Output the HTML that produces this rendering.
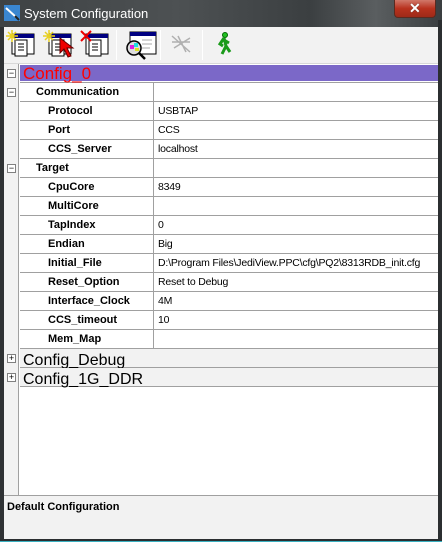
<!DOCTYPE html>
<html><head><meta charset="utf-8"><style>
*{margin:0;padding:0;box-sizing:border-box}
body{width:442px;height:542px;position:relative;overflow:hidden;background:#2f3234;font-family:"Liberation Sans",Tahoma,sans-serif}
.title{position:absolute;left:0;top:0;width:442px;height:27px;background:linear-gradient(90deg,#3e4244 0%,#4d5153 40%,#3b3f41 70%,#5a5e60 85%,#3a3e40 100%)}
.title .t{position:absolute;left:24px;top:6px;color:#fff;font-size:13px}
.close{position:absolute;left:394px;top:0;width:42px;height:18px;border:1px solid #5a2a20;border-top:none;border-radius:0 0 4px 4px;background:linear-gradient(#d0786a,#b8321e 50%,#9e2a18)}
.close span{position:absolute;left:14px;top:0px;color:#fff;font-weight:bold;font-size:14px;text-shadow:0 0 1px #333}
.client{position:absolute;left:4px;top:27px;width:434px;height:512px;background:#fff;overflow:hidden}
.tb{position:absolute;left:0;top:0;width:434px;height:37px;background:#f2f2f2;border-bottom:1px solid #d8d8d8}
.sep{position:absolute;top:3px;width:1px;height:30px;background:#a0a0a0;border-right:1px solid #fff}
.gut{position:absolute;left:0;top:37px;width:15px;height:431px;background:#f2f2f2;border-right:1px solid #a0a0a0}
.row{position:absolute;left:16px;width:418px;height:19px;border-bottom:1px solid #a0a0a0;font-size:11px}
.row .k{position:absolute;top:3px;font-weight:bold}
.row .v{position:absolute;left:133px;top:0;height:18px;border-left:1px solid #a0a0a0;padding:3px 0 0 4px;width:285px;white-space:nowrap;overflow:hidden;font-size:10.5px;letter-spacing:-0.2px}
.box{position:absolute;left:3px;width:9px;height:9px;border:1px solid #808080;background:#fff;font-size:9px;line-height:7px;text-align:center;color:#000}
.grp{font-size:16px;top:0}
.bot{position:absolute;left:0;top:468px;width:434px;height:44px;background:#f2f2f2;border-top:1px solid #a0a0a0}
.bot span{position:absolute;left:3px;top:5px;font-size:11px;font-weight:bold}
</style></head><body>
<div class="title">
<svg style="position:absolute;left:4px;top:5px" width="16" height="16"><rect width="16" height="16" fill="#3a86d0"/><path d="M2 3 L12 12" stroke="#fff" stroke-width="2"/><path d="M11 11 L15 15" stroke="#222" stroke-width="2"/></svg>
<span class="t">System Configuration</span>
<div class="close"><span>✕</span></div>
</div>
<div style="position:absolute;right:0;top:20px;width:4px;height:522px;background:#2b2e30"></div>
<div style="position:absolute;left:0;top:539px;width:442px;height:3px;background:#2b2e30;border-bottom:1px solid #3ab0c0"></div>
<div class="client">
<div class="tb">
<svg style="position:absolute;left:2px;top:3px" width="110" height="30">
<g><rect x="6" y="4" width="22" height="20" fill="#fff" stroke="#000"/><rect x="6" y="4" width="22" height="4" fill="#000080"/><rect x="9" y="10" width="12" height="16" fill="#fff" stroke="#000"/><path d="M12 14h6M12 17h6M12 20h6" stroke="#000"/><path d="M2 2l8 8M10 2l-8 8M6 0v12M0 6h12" stroke="#e8d020" stroke-width="1.5"/></g>
<g transform="translate(37,0)"><rect x="6" y="4" width="22" height="20" fill="#fff" stroke="#000"/><rect x="6" y="4" width="22" height="4" fill="#000080"/><rect x="9" y="10" width="12" height="16" fill="#fff" stroke="#000"/><path d="M12 14h6M12 17h6M12 20h6" stroke="#000"/><path d="M2 2l8 8M10 2l-8 8M6 0v12M0 6h12" stroke="#e8d020" stroke-width="1.5"/><path d="M17 8l0 15 4-4 4 8 3-1-4-8 6 0z" fill="#e00" stroke="#600"/></g>
<g transform="translate(74,0)"><rect x="6" y="4" width="22" height="20" fill="#fff" stroke="#000"/><rect x="6" y="4" width="22" height="4" fill="#000080"/><rect x="9" y="10" width="12" height="16" fill="#fff" stroke="#000"/><path d="M12 14h6M12 17h6M12 20h6" stroke="#000"/><path d="M1 1l10 10M11 1l-10 10" stroke="#e00" stroke-width="2"/></g>
</svg>
<div class="sep" style="left:112px"></div>
<svg style="position:absolute;left:118px;top:3px" width="36" height="30"><rect x="8" y="2" width="26" height="22" fill="#fff" stroke="#000"/><rect x="8" y="2" width="26" height="4" fill="#000080"/><path d="M20 10h10M20 14h10M20 18h8" stroke="#aaa"/><circle cx="12" cy="18" r="7" fill="#ddd" stroke="#000" stroke-width="1.5"/><rect x="8" y="15" width="4" height="4" fill="#e020e0"/><rect x="12" y="13" width="4" height="4" fill="#20e0e0"/><rect x="13" y="18" width="4" height="3" fill="#e0e020"/><path d="M17 23l6 6" stroke="#000" stroke-width="2.5"/></svg>
<div class="sep" style="left:156px"></div>
<svg style="position:absolute;left:166px;top:7px" width="24" height="22"><path d="M2 2l18 16M4 14l16-10M8 2l8 16M2 8h18" stroke="#b0b0b0" stroke-width="1.5"/></svg>
<div class="sep" style="left:198px"></div>
<svg style="position:absolute;left:210px;top:5px" width="20" height="24"><circle cx="11" cy="3" r="2.5" fill="#20c020" stroke="#060"/><path d="M10 6l-4 6 3 2M10 6l2 8-4 8M12 14l4 6M10 8l5 3" stroke="#1a9a1a" stroke-width="3" fill="none"/></svg>
</div>
<div class="gut"></div>
<div class="row" style="top:37px;height:19px;background:#fff"><div style="position:absolute;left:0;top:1px;width:418px;height:16px;background:#7b68c8"></div><span class="k grp" style="left:3px;top:0;color:#f00;font-weight:normal;font-size:17px">Config_0</span></div>
<div class="box" style="top:42px">−</div>
<div class="row" style="top:56px"><span class="k" style="left:16px">Communication</span><div class="v"></div></div>
<div class="box" style="top:61px">−</div>
<div class="row" style="top:75px"><span class="k" style="left:28px">Protocol</span><div class="v">USBTAP</div></div>
<div class="row" style="top:94px"><span class="k" style="left:28px">Port</span><div class="v">CCS</div></div>
<div class="row" style="top:113px"><span class="k" style="left:28px">CCS_Server</span><div class="v">localhost</div></div>
<div class="row" style="top:132px"><span class="k" style="left:16px">Target</span><div class="v"></div></div>
<div class="box" style="top:137px">−</div>
<div class="row" style="top:151px"><span class="k" style="left:28px">CpuCore</span><div class="v">8349</div></div>
<div class="row" style="top:170px"><span class="k" style="left:28px">MultiCore</span><div class="v"></div></div>
<div class="row" style="top:189px"><span class="k" style="left:28px">TapIndex</span><div class="v">0</div></div>
<div class="row" style="top:208px"><span class="k" style="left:28px">Endian</span><div class="v">Big</div></div>
<div class="row" style="top:227px"><span class="k" style="left:28px">Initial_File</span><div class="v">D:\Program Files\JediView.PPC\cfg\PQ2\8313RDB_init.cfg</div></div>
<div class="row" style="top:246px"><span class="k" style="left:28px">Reset_Option</span><div class="v">Reset to Debug</div></div>
<div class="row" style="top:265px"><span class="k" style="left:28px">Interface_Clock</span><div class="v">4M</div></div>
<div class="row" style="top:284px"><span class="k" style="left:28px">CCS_timeout</span><div class="v">10</div></div>
<div class="row" style="top:303px"><span class="k" style="left:28px">Mem_Map</span><div class="v"></div></div>
<div class="row" style="top:322px;background:#f2f2f2"><span class="k grp" style="left:3px;font-weight:normal;font-size:16px">Config_Debug</span></div>
<div class="box" style="top:327px">+</div>
<div class="row" style="top:341px;background:#f2f2f2"><span class="k grp" style="left:3px;font-weight:normal;font-size:16px">Config_1G_DDR</span></div>
<div class="box" style="top:346px">+</div>
<div class="bot"><span>Default Configuration</span></div>
</div>
</body></html>
